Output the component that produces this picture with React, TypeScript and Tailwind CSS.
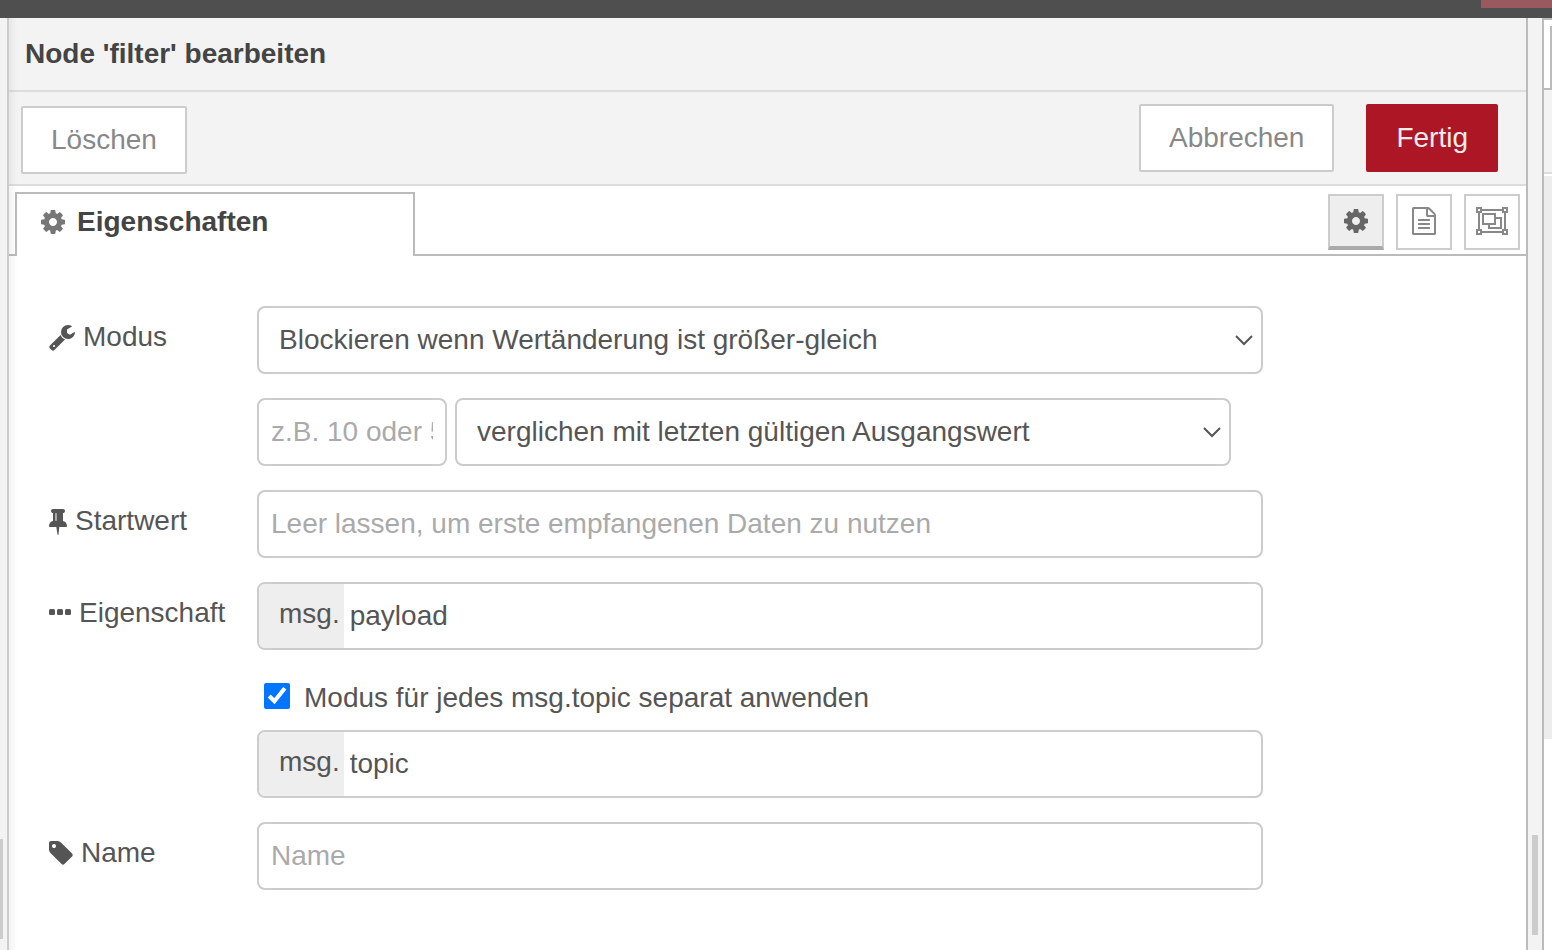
import { useState, type ReactNode } from 'react';
import clsx from 'clsx';

const COG =
  'M1152 896q0-106-75-181t-181-75-181 75-75 181 75 181 181 75 181-75 75-181zm512-109v222q0 12-8 23t-20 13l-185 28q-19 54-39 91 35 50 107 138 10 12 10 25t-9 23q-27 37-99 108t-94 71q-12 0-26-9l-138-108q-44 23-91 38-16 136-29 186-7 28-36 28h-222q-14 0-24.5-8.5t-11.5-21.5l-28-184q-49-16-90-37l-141 107q-10 9-25 9-14 0-25-11-126-114-165-168-7-10-7-23 0-12 8-23 15-21 51-66.5t54-70.5q-27-50-41-99l-183-27q-13-2-21-12.5t-8-23.5v-222q0-12 8-23t19-13l186-28q14-46 39-92-40-57-107-138-10-12-10-24 0-10 9-23 26-36 98.5-107.5t94.5-71.5q13 0 26 10l138 107q44-23 91-38 16-136 29-186 7-28 36-28h222q14 0 24.5 8.5t11.5 21.5l28 184q49 16 90 37l142-107q9-9 24-9 13 0 25 10 129 119 165 170 7 8 7 22 0 12-8 23-15 21-51 66.5t-54 70.5q26 50 41 98l183 28q13 2 21 12.5t8 23.5z';
const FILE_TEXT =
  'M1596 380q28 28 48 76t20 88v1152q0 40-28 68t-68 28h-1344q-40 0-68-28t-28-68v-1600q0-40 28-68t68-28h896q40 0 88 20t76 48zm-444-244v376h376q-10-29-22-41l-313-313q-12-12-41-22zm384 1528v-1024h-416q-40 0-68-28t-28-68v-416h-768v1536h1280zm-1024-864q0-14 9-23t23-9h704q14 0 23 9t9 23v64q0 14-9 23t-23 9h-704q-14 0-23-9t-9-23v-64zm736 224q14 0 23 9t9 23v64q0 14-9 23t-23 9h-704q-14 0-23-9t-9-23v-64q0-14 9-23t23-9h704zm0 256q14 0 23 9t9 23v64q0 14-9 23t-23 9h-704q-14 0-23-9t-9-23v-64q0-14 9-23t23-9h704z';
const WRENCH =
  'M448 1472q0-26-19-45t-45-19-45 19-19 45 19 45 45 19 45-19 19-45zm644-420l-682 682q-37 37-90 37-52 0-91-37l-106-108q-38-36-38-90 0-53 38-91l681-681q39 98 114.5 173.5t173.5 114.5zm634-435q0 39-23 106-47 134-164.5 217.5t-258.5 83.5q-185 0-316.5-131.5t-131.5-316.5 131.5-316.5 316.5-131.5q58 0 121.5 16.5t107.5 46.5q16 11 16 28t-16 28l-293 169v224l193 107q5-3 79-48.5t135.5-81 70.5-35.5q15 0 23.5 10t8.5 25z';
const THUMB_TACK =
  'M800 864v-448q0-14-9-23t-23-9-23 9-9 23v448q0 14 9 23t23 9 23-9 9-23zm672 352q0 26-19 45t-45 19h-429l-51 483q-2 12-10.5 20.5t-20.5 8.5h-1q-27 0-32-27l-76-485h-404q-26 0-45-19t-19-45q0-123 78.5-221.5t177.5-98.5v-512q-52 0-90-38t-38-90 38-90 90-38h640q52 0 90 38t38 90-38 90-90 38v512q99 0 177.5 98.5t78.5 221.5z';
const TAG =
  'M576 448q0-53-37.5-90.5t-90.5-37.5-90.5 37.5-37.5 90.5 37.5 90.5 90.5 37.5 90.5-37.5 37.5-90.5zm1067 576q0 53-37 90l-491 492q-39 37-91 37-53 0-90-37l-715-716q-38-37-64.5-101t-26.5-117v-416q0-52 38-90t90-38h416q53 0 117 26.5t102 64.5l715 714q37 39 37 91z';

const FIELD = 'h-[68px] rounded-lg border-2 border-[#ccc] bg-white text-[28px] text-[#555] outline-none';
const BUTTON = 'h-[68px] rounded-xs text-[28px]';

interface IconProps {
  d: string;
  viewBox: string;
  className: string;
}

function Icon({ d, viewBox, className }: IconProps) {
  return (
    <svg viewBox={viewBox} className={clsx('shrink-0', className)} fill="currentColor" aria-hidden="true">
      <path d={d} />
    </svg>
  );
}

function EllipsisIcon() {
  return (
    <svg viewBox="0 0 22 28" className="h-7 w-[22px] shrink-0" fill="currentColor" aria-hidden="true">
      <rect x="0" y="10" width="6" height="6" rx="1.5" />
      <rect x="8" y="10" width="6" height="6" rx="1.5" />
      <rect x="16" y="10" width="6" height="6" rx="1.5" />
    </svg>
  );
}

function ObjectGroupIcon() {
  return (
    <svg viewBox="0 0 32 28" className="h-7 w-8" fill="none" stroke="currentColor" strokeWidth="2" aria-hidden="true">
      <path d="M6 3h20M6 25h20M3 6v16M29 6v16" />
      <path d="M1 1h4v4h-4zM27 1h4v4h-4zM1 23h4v4h-4zM27 23h4v4h-4z" />
      <path d="M7 7h12v10h-12zM20 11h5v10h-12v-3" />
    </svg>
  );
}

function FormRow({ label, htmlFor, icon, children }: { label?: string; htmlFor?: string; icon?: ReactNode; children: ReactNode }) {
  return (
    <div className="flex items-start">
      <div className="w-52 shrink-0 pt-3">
        {label && (
          <label htmlFor={htmlFor} className="flex h-[38px] items-center gap-2">
            {icon}
            {label}
          </label>
        )}
      </div>
      <div className="w-[70%]">{children}</div>
    </div>
  );
}

function Select({ id, options, label }: { id: string; options: string[]; label?: string }) {
  return (
    <div className="relative grow">
      <select id={id} aria-label={label} className={clsx(FIELD, 'w-full appearance-none pl-5 pr-10')}>
        {options.map((o) => (
          <option key={o}>{o}</option>
        ))}
      </select>
      <svg
        viewBox="0 0 18 12"
        className="pointer-events-none absolute right-2.5 top-7 h-3 w-[18px] text-[#555]"
        fill="none"
        stroke="currentColor"
        strokeWidth="2"
        aria-hidden="true"
      >
        <path d="M1 2l8 8 8-8" />
      </svg>
    </div>
  );
}

function TypedInput({ id, defaultValue, label }: { id: string; defaultValue: string; label?: string }) {
  return (
    <div className={clsx(FIELD, 'flex overflow-hidden')}>
      <button type="button" className="bg-[#eee] pb-1 pl-5 pr-1">
        msg.
      </button>
      <input id={id} aria-label={label} defaultValue={defaultValue} className="min-w-0 grow px-1.5 outline-none" />
    </div>
  );
}

function PaneButton({ label, selected, children }: { label: string; selected?: boolean; children: ReactNode }) {
  return (
    <button
      type="button"
      aria-label={label}
      className={clsx(
        'flex size-14 items-center justify-center border-2 border-[#ccc]',
        selected ? 'border-b-4 border-b-[#aaa] bg-[#eee] text-[#666]' : 'bg-white pb-0.5 text-[#888]'
      )}
    >
      {children}
    </button>
  );
}

function Sidebar() {
  return (
    <aside className="flex w-2.5 shrink-0 flex-col border-l-2 border-[#bbb] bg-white">
      <div className="h-[72px] border-b-2 border-t-2 border-[#bbb] pt-1.5">
        <div className="ml-auto h-full w-0.5 bg-[#bbb]" />
      </div>
      <div className="mb-0.5 h-21 border-b-2 border-[#ddd] bg-[#f3f3f3]" />
      <div className="grow bg-[#ededed]" />
      <div className="h-[211px]" />
    </aside>
  );
}

export default function App() {
  const [separate, setSeparate] = useState(true);

  return (
    <div className="flex min-h-screen flex-col bg-[#f3f3f3] font-['Liberation_Sans',Arial,sans-serif] text-[28px] leading-10 text-[#555]">
      <div className="flex h-[18px] justify-end bg-[#4f4f4f]">
        <div className="h-2 w-[71px] bg-[#99595f]" />
      </div>

      <div className="flex grow">
        <div className="flex w-[7px] shrink-0 items-end pb-[11px]">
          <div className="h-25 w-[3px] bg-[#ccc]" />
        </div>

        <main className="relative flex min-w-0 grow flex-col border-l-2 border-r-2 border-l-[#ccc] border-r-[#bbb] bg-white">
          <header className="h-[74px] border-b-2 border-[#ddd] bg-[#f3f3f3] px-4 py-4">
            <h1 className="font-bold text-[#444]">Node 'filter' bearbeiten</h1>
          </header>

          <div className="flex h-[94px] justify-between border-b-2 border-[#ddd] bg-[#f3f3f3] pl-3 pr-7">
            <div className="pt-3.5">
              <button type="button" className={clsx(BUTTON, 'border-2 border-[#ccc] bg-white px-7 text-[#888]')}>
                Löschen
              </button>
            </div>
            <div className="flex gap-8 pt-3">
              <button type="button" className={clsx(BUTTON, 'border-2 border-[#ccc] bg-white px-7 text-[#888]')}>
                Abbrechen
              </button>
              <button type="button" className={clsx(BUTTON, 'bg-[#ad1625] px-[30px] text-[#eee]')}>
                Fertig
              </button>
            </div>
          </div>

          <div className="flex h-[70px] justify-between border-b-2 border-[#bbb] px-1.5">
            <button
              type="button"
              className="mt-1.5 flex h-16 w-[400px] items-center gap-3 border-x-2 border-t-2 border-[#bbb] bg-white pb-1.5 pl-6 font-bold text-[#444]"
            >
              <Icon d={COG} viewBox="128 128 1536 1536" className="size-6 text-[#777]" />
              Eigenschaften
            </button>
            <div className="flex gap-3 pt-2">
              <PaneButton label="Eigenschaften" selected>
                <Icon d={COG} viewBox="128 128 1536 1536" className="size-6" />
              </PaneButton>
              <PaneButton label="Beschreibung">
                <Icon d={FILE_TEXT} viewBox="128 0 1536 1792" className="h-7 w-6" />
              </PaneButton>
              <PaneButton label="Darstellung">
                <ObjectGroupIcon />
              </PaneButton>
            </div>
          </div>

          <form className="flex flex-col gap-6 px-10 pb-10 pt-[50px]">
            <FormRow
              label="Modus"
              htmlFor="func"
              icon={<Icon d={WRENCH} viewBox="64 0 1664 1792" className="h-7 w-[26px]" />}
            >
              <Select id="func" options={['Blockieren wenn Wertänderung ist größer-gleich']} />
            </FormRow>

            <FormRow>
              <div className="flex gap-2 pr-8">
                <input
                  aria-label="Wertänderung"
                  placeholder="z.B. 10 oder 5%"
                  className={clsx(FIELD, 'w-[190px] px-3 placeholder:text-[#aaa]')}
                />
                <Select id="inout" label="Vergleich" options={['verglichen mit letzten gültigen Ausgangswert']} />
              </div>
            </FormRow>

            <FormRow
              label="Startwert"
              htmlFor="start"
              icon={<Icon d={THUMB_TACK} viewBox="320 0 1152 1792" className="h-7 w-[18px]" />}
            >
              <input
                id="start"
                placeholder="Leer lassen, um erste empfangenen Daten zu nutzen"
                className={clsx(FIELD, 'w-full px-3 placeholder:text-[#aaa]')}
              />
            </FormRow>

            <FormRow label="Eigenschaft" htmlFor="property" icon={<EllipsisIcon />}>
              <TypedInput id="property" defaultValue="payload" />
            </FormRow>

            <FormRow>
              <label className="mb-3 flex h-11 items-center gap-3.5 pl-[7px]">
                <input
                  type="checkbox"
                  checked={separate}
                  onChange={(e) => setSeparate(e.target.checked)}
                  className="size-[26px] accent-[#0075ff]"
                />
                <span className="pt-1">Modus für jedes msg.topic separat anwenden</span>
              </label>
              {separate && <TypedInput id="topic" label="Topic" defaultValue="topic" />}
            </FormRow>

            <FormRow label="Name" htmlFor="name" icon={<Icon d={TAG} viewBox="128 0 1536 1792" className="h-7 w-6" />}>
              <input id="name" placeholder="Name" className={clsx(FIELD, 'w-full px-3 placeholder:text-[#aaa]')} />
            </FormRow>
          </form>

          {/* soft shadow cast by the tray edge */}
          <div className="pointer-events-none absolute inset-y-0 left-0 w-2 bg-linear-to-r from-black/5 to-transparent" />
        </main>

        <div className="flex w-3.5 shrink-0 items-end justify-center pb-[15px]">
          <div className="h-25 w-1.5 bg-[#ccc]" />
        </div>

        <Sidebar />
      </div>
    </div>
  );
}
